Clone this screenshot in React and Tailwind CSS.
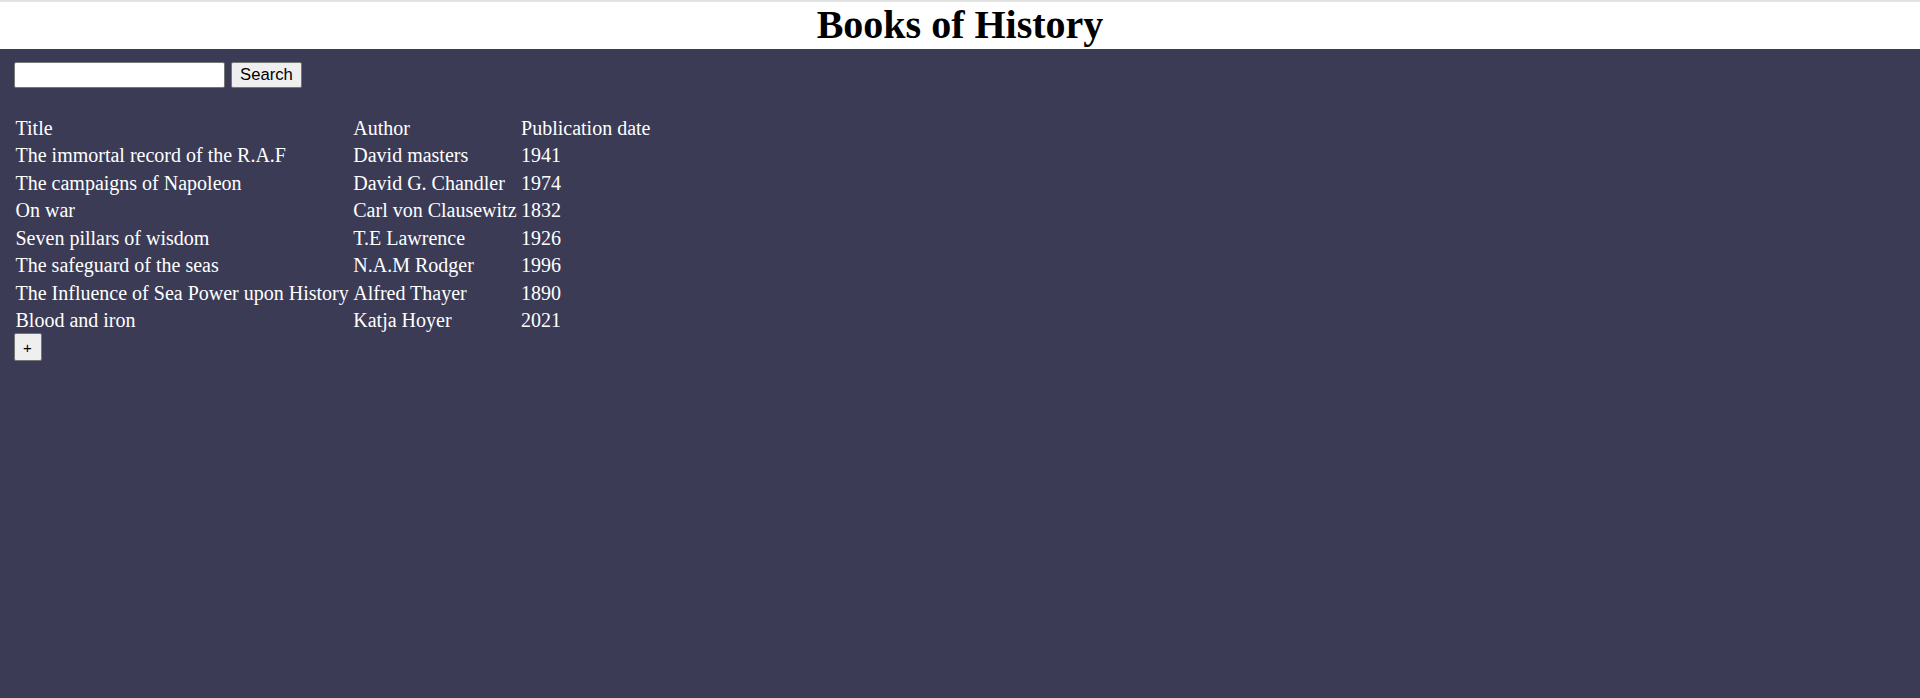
import { useState } from "react";

const books = [
  { title: "The immortal record of the R.A.F", author: "David masters", date: "1941" },
  { title: "The campaigns of Napoleon", author: "David G. Chandler", date: "1974" },
  { title: "On war", author: "Carl von Clausewitz", date: "1832" },
  { title: "Seven pillars of wisdom", author: "T.E Lawrence", date: "1926" },
  { title: "The safeguard of the seas", author: "N.A.M Rodger", date: "1996" },
  { title: "The Influence of Sea Power upon History", author: "Alfred Thayer", date: "1890" },
  { title: "Blood and iron", author: "Katja Hoyer", date: "2021" },
];

const cell = "h-[25.5px] px-[1.25px] py-0 leading-[23px] whitespace-nowrap text-left align-middle";

const App = () => {
  const [query, setQuery] = useState("");

  return (
    <div className="min-h-[698px] flex flex-col bg-[#3b3b56] font-['Liberation_Serif','Times_New_Roman',serif]">
      {/* Header */}
      <header className="bg-white border-t-2 border-[#e2e2e2]">
        <h1 className="h-[47px] leading-[45px] text-center text-[40px] font-bold text-black">
          Books of History
        </h1>
      </header>

      <main className="flex-1 pl-[13.5px] pt-[13px] text-white">
        <div className="flex items-center gap-[6px]">
          <input
            type="text"
            value={query}
            onChange={(e) => setQuery(e.target.value)}
            className="w-[211.5px] h-[26px] bg-white border border-[#767676] rounded-[2px] px-1 text-black font-['Liberation_Sans',Arial,sans-serif] text-[16.67px] outline-none"
          />
          <button className="w-[71px] h-[26px] bg-[#efefef] border border-[#767676] rounded-[2px] text-black font-['Liberation_Sans',Arial,sans-serif] text-[16.67px] leading-none">
            Search
          </button>
        </div>

        <table className="mt-[25.5px] -ml-[1.25px] border-separate border-spacing-x-[2.5px] border-spacing-y-[2px] text-[20px]">
          <tbody>
            <tr>
              <td className={cell}>Title</td>
              <td className={cell}>Author</td>
              <td className={cell}>Publication date</td>
            </tr>
            {books.map((b) => (
              <tr key={b.title}>
                <td className={cell}>{b.title}</td>
                <td className={cell}>{b.author}</td>
                <td className={cell}>{b.date}</td>
              </tr>
            ))}
          </tbody>
        </table>

        <button className="-mt-[3px] w-[28px] h-[28px] bg-[#efefef] border border-[#767676] rounded-[2px] text-black font-['Liberation_Sans',Arial,sans-serif] text-[15px] leading-none">
          +
        </button>
      </main>
    </div>
  );
};

export default App;
